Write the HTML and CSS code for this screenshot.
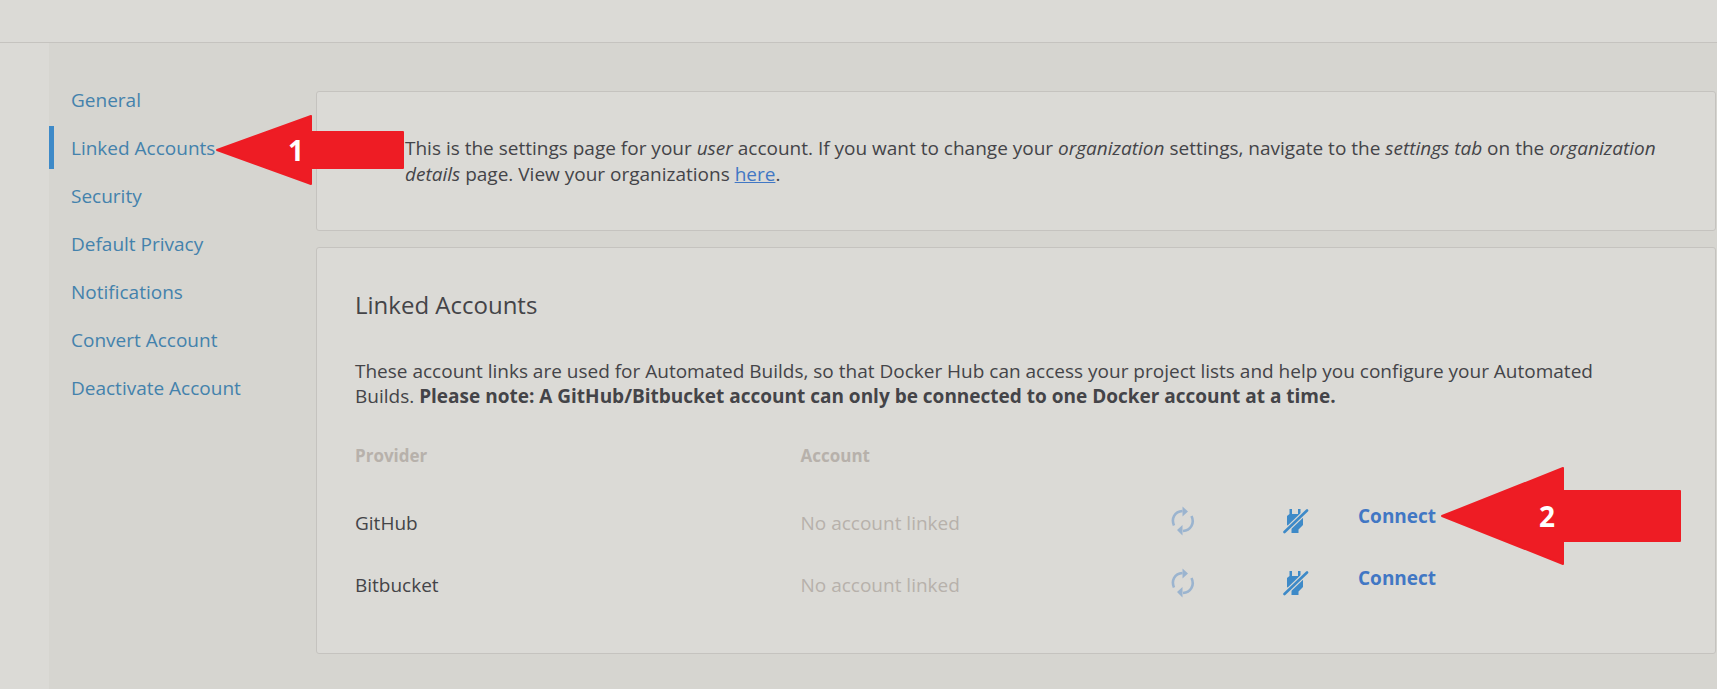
FILE: index.html
```html
<!DOCTYPE html>
<html lang="en">
<head>
<meta charset="utf-8">
<title>Linked Accounts</title>
<link rel="stylesheet" href="styles.css">
</head>
<body>
<svg class="sprite" aria-hidden="true">
  <symbol id="refresh" viewBox="0 0 24 30">
    <path d="M3 19.500C0 12.500 3.500 5.500 11.500 5" fill="none" stroke="currentColor" stroke-width="2.600"/>
    <path d="M20.500 10C24 17.500 19.500 24.500 12 25" fill="none" stroke="currentColor" stroke-width="2.600"/>
    <path d="M11.500 0.500L17 5.500L11.500 10.500ZM11.500 19L6 24L11.500 29.500Z" fill="currentColor"/>
  </symbol>
  <symbol id="unplug" viewBox="0 0 26 26">
    <path d="M6.500 1H9V6H15V1H17.500V6L20 7.500V17L15.500 21.500V25H8.500V21L4 17V8L6.500 6Z" fill="currentColor"/>
    <path d="M0 25.500L25 1.500" fill="none" stroke="#dbdad6" stroke-width="5"/>
    <path d="M1.500 24L24 2.500" fill="none" stroke="currentColor" stroke-width="2.600" stroke-linecap="round"/>
  </symbol>
</svg>
<header class="topbar"></header>
<div class="layout">
  <nav class="sidebar" aria-label="Settings">
    <a class="nav-link" href="#general">General</a>
    <a class="nav-link active" href="#linked" aria-current="page">Linked Accounts
      <span class="arrow arrow-one">
        <svg viewBox="0 0 188 70" aria-hidden="true"><path d="M1 35L95 1V17H187V53H95V69Z"/></svg>
        <span class="arrow-number">1</span>
      </span>
    </a>
    <a class="nav-link" href="#security">Security</a>
    <a class="nav-link" href="#privacy">Default Privacy</a>
    <a class="nav-link" href="#notifications">Notifications</a>
    <a class="nav-link" href="#convert">Convert Account</a>
    <a class="nav-link" href="#deactivate">Deactivate Account</a>
  </nav>
  <main class="content">
    <section class="card notice">
      <p>This is the settings page for your <em>user</em> account. If you want to change your <em>organization</em> settings, navigate to the <em>settings tab</em> on the <em>organization details</em> page. View your organizations <a href="#organizations">here</a>.</p>
    </section>
    <section class="card linked">
      <h1>Linked Accounts</h1>
      <p class="intro">These account links are used for Automated Builds, so that Docker Hub can access your project lists and help you configure your Automated Builds. <strong>Please note: A GitHub/Bitbucket account can only be connected to one Docker account at a time.</strong></p>
      <table class="accounts">
        <thead>
          <tr><th class="col-provider" scope="col">Provider</th><th class="col-account" scope="col">Account</th><td class="col-sync"></td><td class="col-unlink"></td></tr>
        </thead>
        <tbody>
          <tr>
            <td>GitHub</td>
            <td class="muted">No account linked</td>
            <td><button class="icon-button sync" type="button" aria-label="Refresh GitHub"><svg width="24" height="30"><use href="#refresh"/></svg></button></td>
            <td><div class="actions"><button class="icon-button" type="button" aria-label="Unlink GitHub"><svg width="26" height="26"><use href="#unplug"/></svg></button><a class="connect" href="#github">Connect
              <span class="arrow arrow-two">
                <svg viewBox="0 0 240 98" aria-hidden="true"><path d="M1 49L122 1V24H239V74H122V97Z"/></svg>
                <span class="arrow-number">2</span>
              </span></a></div></td>
          </tr>
          <tr>
            <td>Bitbucket</td>
            <td class="muted">No account linked</td>
            <td><button class="icon-button sync" type="button" aria-label="Refresh Bitbucket"><svg width="24" height="30"><use href="#refresh"/></svg></button></td>
            <td><div class="actions"><button class="icon-button" type="button" aria-label="Unlink Bitbucket"><svg width="26" height="26"><use href="#unplug"/></svg></button><a class="connect" href="#bitbucket">Connect</a></div></td>
          </tr>
        </tbody>
      </table>
    </section>
  </main>
</div>
</body>
</html>
```

FILE: styles.css
```css
* { box-sizing: border-box; }
body {
  margin: 0;
  min-height: 100vh;
  display: flex;
  flex-direction: column;
  background: #dbdad6;
  color: #444448;
  font: 400 19px/26px "Open Sans", sans-serif;
}
strong { font-weight: 700; }
.sprite { position: absolute; width: 0; height: 0; }
.topbar { height: 43px; border-bottom: 1px solid #c5c3bf; }
.layout {
  flex: 1;
  display: flex;
  margin-left: 49px;
  padding-right: 1px;
  background: #d6d5d0;
}
.sidebar {
  width: 267px;
  flex: none;
  padding-top: 35px;
  display: flex;
  flex-direction: column;
  gap: 5px;
}
.nav-link {
  position: relative;
  height: 43px;
  padding: 9px 0 0 17px;
  border-left: 5px solid transparent;
  color: #4482ac;
  text-decoration: none;
}
.nav-link.active { border-color: #3e8ac8; }
.content { flex: 1; min-width: 0; padding: 48px 0 35px; }
.card {
  background: #dbdad6;
  border: 1px solid #c5c3bf;
  border-radius: 3px;
}
.card p { margin: 0; }
.notice { padding: 43px 48px 43px 88px; }
.notice a { color: #4177c4; text-decoration: underline; }
.linked { margin-top: 16px; padding: 41px 38px 37px; }
h1 { margin: 0 0 38px; font-size: 24px; line-height: 32px; font-weight: 400; }
.linked .intro { line-height: 25px; padding-right: 60px; }
.accounts {
  width: 100%;
  margin-top: 28px;
  border-collapse: collapse;
  table-layout: fixed;
}
td, th { padding: 0; text-align: left; vertical-align: middle; }
th { height: 55px; padding-bottom: 18px; font-size: 17px; color: #b7b1ab; }
tbody td { height: 62px; }
.col-provider { width: 33.7%; }
.col-account { width: 28%; }
.col-sync { width: 8.5%; }
.accounts .muted { color: #b7b1ab; }
.icon-button {
  display: block;
  padding: 0;
  border: 0;
  background: none;
  color: #3e8ac8;
}
.icon-button svg { display: block; }
.icon-button.sync { color: #9bb4cf; padding-bottom: 4px; }
.actions {
  display: flex;
  align-items: flex-end;
  gap: 49px;
  padding-bottom: 10px;
}
.connect {
  position: relative;
  margin-bottom: 5px;
  color: #4177c4;
  font-weight: 700;
  text-decoration: none;
}
.arrow { position: absolute; z-index: 1; }
.arrow svg {
  display: block;
  width: 100%;
  fill: #ee1c24;
  stroke: #ee1c24;
  stroke-width: 2px;
  stroke-linejoin: round;
}
.arrow-number {
  position: absolute;
  top: 50%;
  transform: translateY(-50%);
  color: #fff;
  font-size: 28px;
  line-height: 32px;
  font-weight: 700;
}
.arrow-one { left: 162px; top: -11px; width: 188px; }
.arrow-one .arrow-number { left: 72px; }
.arrow-two { left: 83px; top: -36px; width: 240px; }
.arrow-two .arrow-number { left: 98px; }
```
